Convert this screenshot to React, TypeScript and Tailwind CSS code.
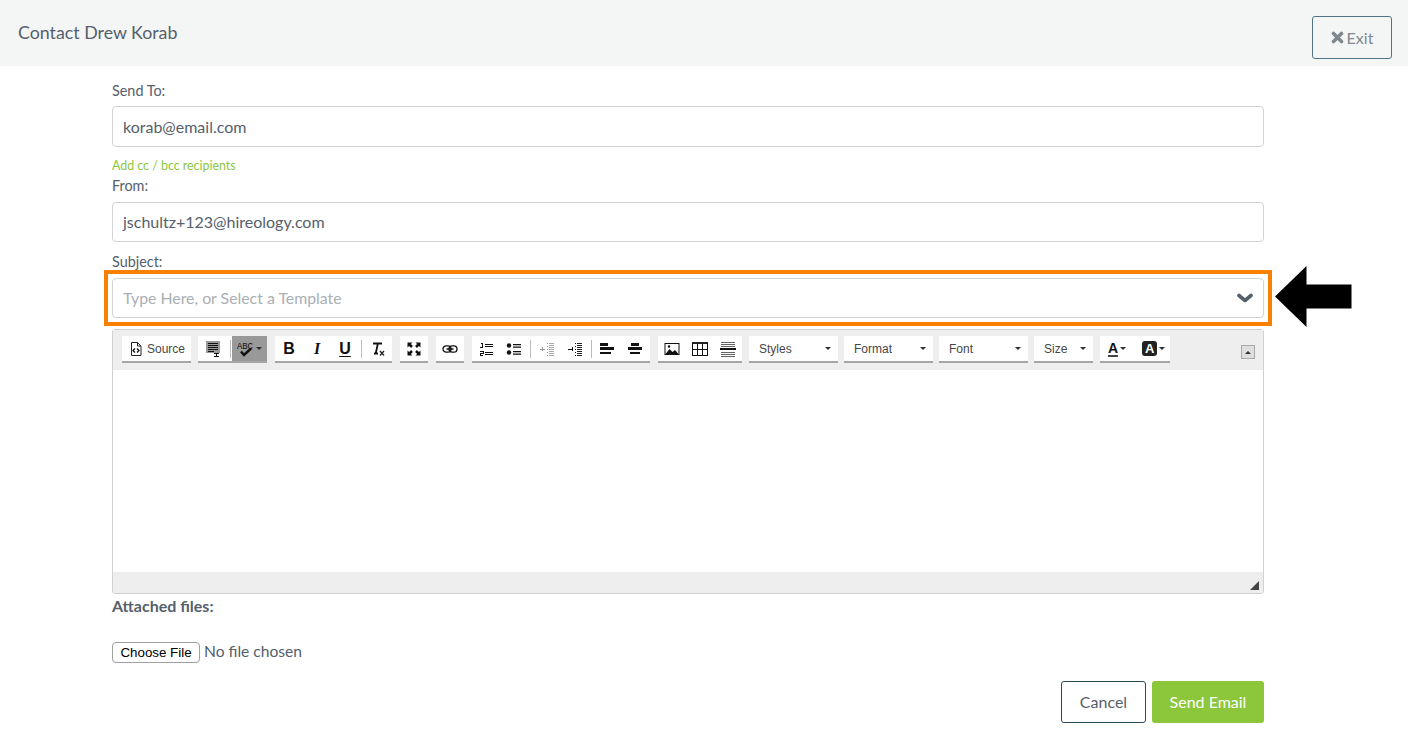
function Ic({ children }: { children: React.ReactNode }) {
  return (
    <svg width="16" height="16" viewBox="0 0 16 16" fill="none" shapeRendering="crispEdges">
      {children}
    </svg>
  );
}

const icons = {
  source: (
    <svg width="16" height="16" viewBox="0 0 16 16" fill="none">
      <path d="M3.500 1.500h6l3.500 3.500v9.500h-9.500z" stroke="#222" strokeWidth="1" />
      <path d="M9.500 1.500v3.500h3.500" stroke="#222" strokeWidth="1" />
      <path d="M7 7.500l-2 2 2 2M9 7.500l2 2-2 2" stroke="#111" strokeWidth="1.300" />
    </svg>
  ),
  templates: (
    <Ic>
      <rect x="1" y="0" width="14" height="12" fill="#999" />
      <path d="M3 2h10M3 4h10M3 6h10M3 8h10M3 10h6" stroke="#111" />
      <path d="M9 12h5M11 12v3M9 15h5" stroke="#111" />
    </Ic>
  ),
  spell: (
    <svg width="18" height="16" viewBox="0 0 18 16" fill="none">
      <text x="0" y="7.500" fontSize="9" fontFamily="Liberation Mono, monospace" fill="#111" textLength="16">
        ABC
      </text>
      <path d="M4 10.500l3 3.500 7-6.500" stroke="#111" strokeWidth="2.400" />
    </svg>
  ),
  clear: (
    <svg width="16" height="16" viewBox="0 0 16 16" fill="none">
      <path d="M3 2.500h9" stroke="#111" strokeWidth="2" />
      <path d="M7.800 3l-2 9M4 12.500h4" stroke="#111" strokeWidth="1.800" />
      <path d="M10 10l4 4.500M14 10l-4 4.500" stroke="#222" strokeWidth="1.300" />
    </svg>
  ),
  maximize: (
    <svg width="16" height="16" viewBox="0 0 16 16" fill="#111">
      <path d="M1.500 1.500h5l-1.600 1.600 2 2-1.800 1.800-2-2-1.600 1.600zM14.500 1.500v5l-1.600-1.600-2 2-1.800-1.800 2-2-1.600-1.600zM1.500 14.500v-5l1.600 1.600 2-2 1.800 1.800-2 2 1.600 1.600zM14.500 14.500h-5l1.600-1.600-2-2 1.800-1.800 2 2 1.600-1.600z" />
    </svg>
  ),
  link: (
    <svg width="16" height="16" viewBox="0 0 16 16" fill="none">
      <rect x="1" y="4.800" width="8" height="6.400" rx="3.200" stroke="#111" strokeWidth="1.300" />
      <rect x="7" y="4.800" width="8" height="6.400" rx="3.200" stroke="#111" strokeWidth="1.300" />
      <path d="M4.500 8h7" stroke="#111" strokeWidth="1.300" />
    </svg>
  ),
  numbered: (
    <Ic>
      <path d="M3 2h1v4M2 6h3M2 10h3v2H2v2h3" stroke="#111" />
      <path d="M7 3h8M7 5h8M7 11h8M7 13h8" stroke="#111" />
    </Ic>
  ),
  bulleted: (
    <svg width="16" height="16" viewBox="0 0 16 16" fill="#111">
      <circle cx="3" cy="4.500" r="2.200" />
      <circle cx="3" cy="11.500" r="2.200" />
      <path d="M7 3h8v1.300H7zM7 5.500h8v1.300H7zM7 10h8v1.300H7zM7 12.500h8v1.300H7z" />
    </svg>
  ),
  outdent: (
    <Ic>
      <path d="M8 2v1M8 5v1M8 8v1M8 11v1M8 14v1" stroke="#999" />
      <path d="M10 2h5M10 4h5M10 6h5M10 8h5M10 10h5M10 12h5M10 14h5" stroke="#aaa" />
      <path d="M1 8h5M3 6v4" stroke="#999" />
    </Ic>
  ),
  indent: (
    <Ic>
      <path d="M8 2v1M8 5v1M8 8v1M8 11v1M8 14v1" stroke="#111" />
      <path d="M10 2h5M10 4h5M10 6h5M10 8h5M10 10h5M10 12h5M10 14h5" stroke="#222" />
      <path d="M1 8h5M5 6v4" stroke="#111" />
    </Ic>
  ),
  left: (
    <Ic>
      <rect x="1" y="2" width="8" height="3" fill="#111" />
      <rect x="1" y="6" width="14" height="3" fill="#111" />
      <rect x="1" y="11" width="11" height="2" fill="#111" />
    </Ic>
  ),
  center: (
    <Ic>
      <rect x="4" y="2" width="8" height="3" fill="#111" />
      <rect x="1" y="6" width="14" height="3" fill="#111" />
      <rect x="3" y="11" width="10" height="2" fill="#111" />
    </Ic>
  ),
  image: (
    <svg width="16" height="16" viewBox="0 0 16 16" fill="none">
      <rect x="1" y="2.500" width="14" height="11" stroke="#111" />
      <path d="M1.500 13l4-5 3 3 2.500-2 3.500 4z" fill="#111" />
      <circle cx="5" cy="5.500" r="1.200" fill="#111" />
    </svg>
  ),
  table: (
    <Ic>
      <rect x="0" y="1" width="16" height="2" fill="#222" />
      <path d="M0.500 3v11.500h15V3M0.500 8.500h15M5.500 3v11.500M10.500 3v11.500" stroke="#111" />
    </Ic>
  ),
  hr: (
    <Ic>
      <path d="M1 1h14M1 3h14M1 5h14M1 11h14M1 13h14M1 15h14" stroke="#666" />
      <rect x="0" y="7" width="16" height="2" fill="#111" />
    </Ic>
  ),
};

function Btn({ children, w = 'w-[28px]', bg = '' }: { children: React.ReactNode; w?: string; bg?: string }) {
  return <div className={`flex h-full items-center justify-center ${w} ${bg}`}>{children}</div>;
}

function Sep({ w = 'w-[5px]' }: { w?: string }) {
  return (
    <div className={`flex h-full items-center justify-center ${w}`}>
      <div className="h-[18px] w-px bg-[#bcbcbc]" />
    </div>
  );
}

function Group({ children, className }: { children: React.ReactNode; className: string }) {
  return <div className={`flex h-[27px] border-b-2 border-[#a6a6a6] bg-white ${className}`}>{children}</div>;
}

function Caret() {
  return <span className="h-0 w-0 border-x-[3px] border-t-[3px] border-x-transparent border-t-[#2f2f2f]" />;
}

function Combo({ label, className }: { label: string; className: string }) {
  return (
    <Group className={`items-center justify-between pl-[10px] pr-[7px] ${className}`}>
      <span className="text-[12px] text-[#474747]">{label}</span>
      <Caret />
    </Group>
  );
}

function Letter({ children, className = '' }: { children: React.ReactNode; className?: string }) {
  return <span className={`text-[16px] leading-none font-bold text-[#111] ${className}`}>{children}</span>;
}

function Toolbar() {
  return (
    <div className="relative flex h-[40px] items-start bg-[#eeeeee] pt-[6px] pl-[9px] font-['Liberation_Sans',sans-serif]">
      <Group className="w-[69px] items-center gap-[3px] pl-[6px]">
        {icons.source}
        <span className="text-[12px] text-[#474747]">Source</span>
      </Group>
      <Group className="ml-[7px] w-[69px]">
        <Btn w="w-[30px]">{icons.templates}</Btn>
        <Sep w="w-[4px]" />
        <Btn w="w-[35px]" bg="bg-[#999999] gap-[1px]">
          {icons.spell}
          <Caret />
        </Btn>
      </Group>
      <Group className="ml-[8px] w-[117px]">
        <Btn><Letter>B</Letter></Btn>
        <Btn><Letter className="font-['Liberation_Serif',serif] italic">I</Letter></Btn>
        <Btn><Letter className="underline underline-offset-2">U</Letter></Btn>
        <Sep />
        <Btn>{icons.clear}</Btn>
      </Group>
      <Group className="ml-[8px] w-[28px]"><Btn>{icons.maximize}</Btn></Group>
      <Group className="ml-[8px] w-[28px]"><Btn>{icons.link}</Btn></Group>
      <Group className="ml-[8px] w-[178px]">
        <Btn>{icons.numbered}</Btn>
        <Btn>{icons.bulleted}</Btn>
        <Sep />
        <Btn>{icons.outdent}</Btn>
        <Btn>{icons.indent}</Btn>
        <Sep w="w-[4px]" />
        <Btn>{icons.left}</Btn>
        <Btn>{icons.center}</Btn>
      </Group>
      <Group className="ml-[8px] w-[84px]">
        <Btn>{icons.image}</Btn>
        <Btn>{icons.table}</Btn>
        <Btn>{icons.hr}</Btn>
      </Group>
      <Combo label="Styles" className="ml-[7px] w-[89px]" />
      <Combo label="Format" className="ml-[6px] w-[89px]" />
      <Combo label="Font" className="ml-[6px] w-[89px]" />
      <Combo label="Size" className="ml-[6px] w-[59px]" />
      <Group className="ml-[7px] w-[70px] items-center gap-[16px] pl-[8px]">
        <span className="flex items-center gap-[2px]">
          <span className="border-b-2 border-[#444] text-[14px] leading-[14px] font-bold text-[#111]">A</span>
          <Caret />
        </span>
        <span className="flex items-center gap-[2px]">
          <span className="flex h-[15px] w-[15px] items-center justify-center rounded-[3px] bg-[#222] text-[13px] font-bold text-white">A</span>
          <Caret />
        </span>
      </Group>
      <div className="ml-auto mr-[8px] mt-[9px] flex h-[14px] w-[14px] items-center justify-center border border-[#a8a8a8] bg-[#dedede]">
        <span className="h-0 w-0 border-x-[3px] border-b-[3px] border-x-transparent border-b-[#333]" />
      </div>
    </div>
  );
}

export default function App() {
  return (
    <div className="relative min-h-[745px] bg-white font-['Lato',sans-serif] text-[16px] text-[#55606b]">
      <header className="flex h-[66px] items-start justify-between bg-[#f4f6f6] pt-[16px] pr-[16px] pl-[18px]">
        <h1 className="mt-[3px] text-[17.8px] leading-[27px]">Contact Drew Korab</h1>
        <button className="flex h-[43px] w-[80px] items-center justify-center gap-[3px] rounded-[3px] border border-[#4f7488] text-[16px] text-[#80888f]">
          <svg width="13" height="13" viewBox="0 0 13 13" fill="none">
            <path d="M2.500 2.500l8 8M10.500 2.500l-8 8" stroke="#80888f" strokeWidth="3.600" strokeLinecap="round" />
          </svg>
          Exit
        </button>
      </header>

      <main className="ml-[112px] w-[1152px]">
        <label className="mt-[14px] block text-[14.4px] leading-[21px]">Send To:</label>
        <div className="mt-[5px] flex h-[41px] items-center rounded-[4px] border border-[#d3d3d3] px-[10px]">korab@email.com</div>
        <a className="mt-[10px] block text-[12.4px] leading-[18px] text-[#8cc63f]">Add cc / bcc recipients</a>
        <label className="block text-[14.4px] leading-[21px]">From:</label>
        <div className="mt-[6px] flex h-[40px] items-center rounded-[4px] border border-[#d3d3d3] px-[10px]">jschultz+123@hireology.com</div>
        <label className="mt-[9px] block text-[14.4px] leading-[21px]">Subject:</label>
        <div className="mt-[6px] flex h-[40px] items-center justify-between rounded-[4px] border border-[#d3d3d3] pr-[10px] pl-[10px] text-[15.85px] text-[#a9afb4]">
          Type Here, or Select a Template
          <svg width="16" height="10" viewBox="0 0 16 10" fill="none">
            <path d="M2 2.500l6 5 6-5" stroke="#55606b" strokeWidth="3.600" strokeLinecap="round" strokeLinejoin="round" />
          </svg>
        </div>

        <div className="mt-[11px] flex h-[265px] flex-col overflow-hidden rounded-[3px] border border-[#d1d1d1]">
          <Toolbar />
          <div className="flex-1 bg-white" />
          <div className="relative h-[21px] bg-[#eeeeee]">
            <span className="absolute right-[4px] bottom-[3px] h-0 w-0 border-b-[9px] border-l-[9px] border-b-[#444] border-l-transparent" />
          </div>
        </div>

        <p className="text-[16px] leading-[24px] font-bold">Attached files:</p>
        <input
          type="file"
          className="mt-[22px] block h-[24px] w-full text-[15.6px] file:mr-[4px] file:h-[21px] file:w-[88px] file:rounded-[4px] file:border file:border-[#a0a0a0] file:bg-white file:font-['Liberation_Sans',sans-serif] file:text-[13.33px] file:text-black"
        />
        <div className="mt-[17px] flex justify-end gap-[6px]">
          <button className="h-[42px] w-[85px] rounded-[3px] border border-[#264c5c] text-[#55606b]">Cancel</button>
          <button className="h-[42px] w-[112px] rounded-[3px] bg-[#8cc63a] text-white">Send Email</button>
        </div>
      </main>

      {/* annotation drawn over the form */}
      <div className="pointer-events-none absolute top-[270px] left-[104px] h-[56px] w-[1168px] border-4 border-[#f98000]" />
      <svg className="pointer-events-none absolute top-[265px] left-[1275px]" width="77" height="63" viewBox="0 0 77 63">
        <path d="M0 31.500L31.500 1v18.500h45v24h-45V62z" fill="#000" />
      </svg>
    </div>
  );
}
